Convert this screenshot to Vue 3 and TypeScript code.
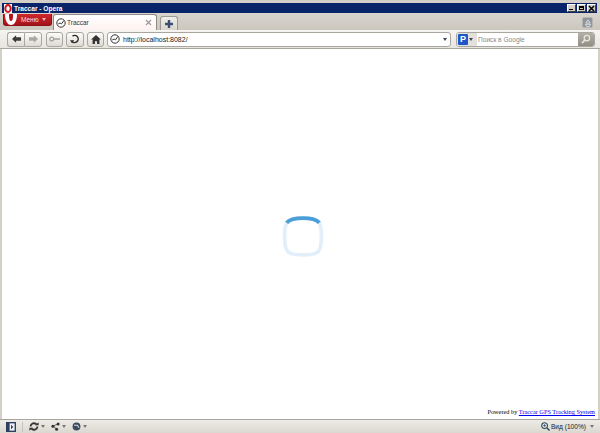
<template>
  <div class="window">
    <div class="titlebar">
      <svg class="title-logo" width="8" height="9" viewBox="0 0 8 9">
        <ellipse cx="4" cy="4.5" rx="2.7" ry="3.5" fill="none" stroke="#d3151c" stroke-width="2" />
      </svg>
      <span class="title-text">Traccar - Opera</span>
      <div class="win-buttons">
        <div class="win-btn"><span class="glyph-min"></span></div>
        <div class="win-btn"><span class="glyph-max"></span></div>
        <div class="win-btn">
          <svg width="7" height="7" viewBox="0 0 7 7">
            <path d="M1 1l5 5M6 1L1 6" stroke="#000" stroke-width="1.5" />
          </svg>
        </div>
      </div>
    </div>

    <div class="tabstrip">
      <div class="menu-btn">
        <svg class="menu-logo" width="12" height="11" viewBox="0 0 12 11">
          <path d="M0 0h12C12 6 10 11 6 11S0 6 0 0z" fill="#fff" />
          <ellipse cx="6" cy="2" rx="2" ry="5" fill="#b5121b" />
        </svg>
        <span class="menu-label">Меню</span>
        <span class="caret caret-light"></span>
      </div>
      <div class="tab">
        <svg class="globe" width="10" height="10" viewBox="0 0 11 11">
          <circle cx="5.5" cy="5.5" r="4.6" fill="#fff" stroke="#333" stroke-width="1.1" />
          <path d="M2.5 6.500l2-1 1.500 1L8.500 3" fill="none" stroke="#333" stroke-width="1.1" />
        </svg>
        <span class="tab-title">Traccar</span>
        <svg class="tab-close" width="7" height="7" viewBox="0 0 7 7">
          <path d="M1 1l5 5M6 1L1 6" stroke="#9a9a9a" stroke-width="1.2" />
        </svg>
      </div>
      <div class="new-tab">
        <svg width="8" height="8" viewBox="0 0 8 8">
          <path d="M4 0v8M0 4h8" stroke="#3b4f72" stroke-width="2.4" />
        </svg>
      </div>
      <div class="trash">
        <svg width="8" height="8" viewBox="0 0 9 9">
          <path d="M4.500 1l2.500 3.500H2zM1.500 6h6L6 8.500H3z" fill="none" stroke="#e2e4e6" stroke-width="1" />
        </svg>
      </div>
    </div>

    <div class="toolbar">
      <div class="btn-group">
        <div class="tool-btn">
          <svg width="9" height="8" viewBox="0 0 11 9"><path d="M0 4.500L5 0v2.500h6v4H5V9z" fill="#3c3c3c" /></svg>
        </div>
        <div class="tool-btn">
          <svg width="9" height="8" viewBox="0 0 11 9"><path d="M11 4.500L6 0v2.500H0v4h6V9z" fill="#a9a9a3" /></svg>
        </div>
      </div>
      <div class="tool-btn wand">
        <svg width="11" height="6" viewBox="0 0 14 7">
          <circle cx="3.5" cy="3.5" r="2.5" fill="none" stroke="#a5a5a0" stroke-width="1.6" />
          <path d="M6 3.500h8" stroke="#a5a5a0" stroke-width="2" />
        </svg>
      </div>
      <div class="tool-btn reload">
        <svg width="10" height="10" viewBox="0 0 12 12">
          <path d="M2 8.500A4.300 4.300 0 1 0 3 2.500" fill="none" stroke="#2d2d2d" stroke-width="1.8" />
          <path d="M0 7.500h5l-2.500 3.500z" fill="#2d2d2d" />
        </svg>
      </div>
      <div class="tool-btn home">
        <svg width="10" height="9" viewBox="0 0 12 11">
          <path d="M6 0l6 5.500h-1.800V11H7.300V7.500H4.700V11H1.800V5.500H0z" fill="#333" />
        </svg>
      </div>
      <div class="address">
        <svg class="globe" width="10" height="10" viewBox="0 0 11 11">
          <circle cx="5.5" cy="5.5" r="4.6" fill="#fff" stroke="#333" stroke-width="1.1" />
          <path d="M2.500 6.500l2-1 1.500 1L8.500 3" fill="none" stroke="#333" stroke-width="1.1" />
        </svg>
        <span class="address-text">http://localhost:8082/</span>
        <span class="caret caret-dark address-caret"></span>
      </div>
      <div class="search">
        <div class="engine">
          <span class="engine-icon">P</span>
          <span class="caret caret-dark"></span>
        </div>
        <span class="search-text">Поиск в Google</span>
        <div class="search-go">
          <svg width="10" height="10" viewBox="0 0 11 11">
            <circle cx="6.5" cy="4.5" r="3" fill="none" stroke="#e8e6e0" stroke-width="1.4" />
            <path d="M4.500 6.500L1 10" stroke="#e8e6e0" stroke-width="1.8" />
          </svg>
        </div>
      </div>
    </div>

    <main class="page">
      <div class="loader">
        <svg width="46" height="45" viewBox="0 0 44 44">
          <path
            d="M22 4C30 4 35 5 37 7.500C39.500 10 40 15 40 22C40 29 39.500 34 37 36.500C35 39 30 40 22 40C14 40 9 39 7 36.500C4.500 34 4 29 4 22C4 15 4.500 10 7 7.500C9 5 14 4 22 4Z"
            fill="none"
            stroke="#e3eefb"
            stroke-width="3.6"
          />
          <path d="M6 8.500C9 5 14 4 22 4C30 4 35 5 38 8.500" fill="none" stroke="#4a9fd8" stroke-width="3.8" />
        </svg>
      </div>
      <div class="powered">
        Powered by <a href="#" class="powered-link">Traccar GPS Tracking System</a>
      </div>
    </main>

    <div class="statusbar">
      <div class="panel-toggle">
        <svg width="10" height="10" viewBox="0 0 11 11">
          <rect width="11" height="11" fill="#2f3f5f" />
          <rect x="4" y="1.5" width="5.5" height="8" fill="#eef0f4" />
          <path d="M5.500 3l2.500 2.500L5.500 8z" fill="#2f3f5f" />
        </svg>
      </div>
      <div class="status-icons">
        <div class="status-item">
          <svg width="10" height="9" viewBox="0 0 13 11">
            <path d="M2 5.500A4.500 4.500 0 0 1 10 3M11 5.500A4.500 4.500 0 0 1 3 8" fill="none" stroke="#333" stroke-width="2.4" />
            <path d="M8 4h4.500V0zM5 7H.5v4z" fill="#333" />
          </svg>
          <span class="caret caret-grey"></span>
        </div>
        <div class="status-item">
          <svg width="9" height="9" viewBox="0 0 12 11">
            <circle cx="2.5" cy="5" r="2" fill="#333" />
            <circle cx="9.5" cy="2" r="2" fill="#333" />
            <circle cx="7.5" cy="9" r="2" fill="#333" />
            <path d="M2.500 5l7-3M2.500 5l5 4" stroke="#333" stroke-width="1" />
          </svg>
          <span class="caret caret-grey"></span>
        </div>
        <div class="status-item">
          <svg width="9" height="9" viewBox="0 0 11 11">
            <circle cx="5.5" cy="5.5" r="4.8" fill="#3c4a5e" />
            <path d="M2.500 4h4l2 3" fill="none" stroke="#d5dae2" stroke-width="1.3" />
          </svg>
          <span class="caret caret-grey"></span>
        </div>
      </div>
      <div class="zoom">
        <svg width="9" height="9" viewBox="0 0 10 10">
          <circle cx="4" cy="4" r="3.2" fill="#e8eef3" stroke="#2f4a58" stroke-width="1.2" />
          <path d="M6.500 6.500L9.500 9.500" stroke="#2f4a58" stroke-width="1.6" />
          <path d="M2.300 4h3.400M4 2.300v3.400" stroke="#2f4a58" stroke-width=".8" />
        </svg>
        <span class="zoom-text">Вид (100%)</span>
        <span class="caret caret-grey zoom-caret"></span>
      </div>
    </div>
  </div>
</template>

<script setup lang="ts">
</script>

<style>
html,
body {
  margin: 0;
  background: #fff;
}
</style>

<style scoped>
.window {
  width: 600px;
  height: 433px;
  box-sizing: border-box;
  display: flex;
  flex-direction: column;
  padding-top: 3px;
  background: #d4d0c8;
  font-family: "Liberation Sans", Arial, sans-serif;
  overflow: hidden;
}

.titlebar {
  height: 10px;
  margin: 0 3px 0 2px;
  display: flex;
  align-items: center;
  background: #0a246a;
  color: #fff;
  flex: none;
}

.title-logo {
  margin-left: 2px;
  background: #fff;
}

.title-text {
  margin-left: 2px;
  font-size: 6.6px;
  font-weight: bold;
}

.win-buttons {
  margin-left: auto;
  display: flex;
  gap: 1px;
  margin-right: 1px;
}

.win-btn {
  width: 9px;
  height: 8px;
  background: #d4d0c8;
  border: 1px solid;
  border-color: #fff #404040 #404040 #fff;
  box-sizing: border-box;
  position: relative;
  display: flex;
  align-items: center;
  justify-content: center;
}

.glyph-min {
  position: absolute;
  left: 1px;
  bottom: 1px;
  width: 4px;
  height: 1px;
  background: #000;
}

.glyph-max {
  width: 5px;
  height: 4px;
  box-sizing: border-box;
  border: 1px solid #000;
  border-top-width: 2px;
}

.tabstrip {
  height: 17px;
  flex: none;
  display: flex;
  align-items: flex-end;
  padding: 0 7px 0 3px;
  background: linear-gradient(#d8d5ce, #cbc7bf);
}

.menu-btn {
  align-self: flex-start;
  margin-top: 1px;
  width: 49px;
  height: 12px;
  box-sizing: border-box;
  display: flex;
  align-items: center;
  background: linear-gradient(#d0282d, #a5121a);
  border-radius: 0 0 3px 3px;
  border: 1px solid #8c1218;
  border-top: 0;
  color: #fff;
  overflow: hidden;
}

.menu-logo {
  margin-left: 1px;
  flex: none;
}

.menu-label {
  margin-left: 4px;
  font-size: 6.5px;
  color: #f7dfdf;
}

.caret {
  width: 0;
  height: 0;
  border-left: 2.5px solid transparent;
  border-right: 2.5px solid transparent;
  border-top: 3px solid #444;
}

.caret-light {
  margin-left: 3px;
  border-top-color: #eeb7b7;
}

.caret-dark {
  border-top-color: #3c4658;
}

.caret-grey {
  border-top-color: #777;
  margin-left: 2px;
}

.tab {
  width: 104px;
  height: 16px;
  margin-left: 1px;
  box-sizing: border-box;
  display: flex;
  align-items: center;
  padding: 0 4px 0 2px;
  background: linear-gradient(#fff, #fff2f0);
  border: 1px solid #8f8c85;
  border-bottom: 0;
  border-radius: 3px 3px 0 0;
}

.globe {
  flex: none;
}

.tab-title {
  margin-left: 1px;
  font-size: 6.5px;
  color: #333;
}

.tab-close {
  margin-left: auto;
}

.new-tab {
  width: 18px;
  height: 14px;
  margin-left: 3px;
  box-sizing: border-box;
  display: flex;
  align-items: center;
  justify-content: center;
  background: linear-gradient(#f1efeb, #d8d5ce);
  border: 1px solid #9c9992;
  border-bottom: 0;
  border-radius: 3px 3px 0 0;
}

.trash {
  margin-left: auto;
  margin-bottom: 2px;
  width: 11px;
  height: 11px;
  display: flex;
  align-items: center;
  justify-content: center;
  background: #8e949c;
  border: 1px solid #b5b5b5;
  border-radius: 2px;
  box-sizing: border-box;
}

.toolbar {
  height: 19px;
  flex: none;
  box-sizing: border-box;
  display: flex;
  align-items: center;
  padding: 0 5px 0 7px;
  background: linear-gradient(#f6f4f1, #e8e5df);
  border-bottom: 1px solid #a8a69f;
}

.btn-group {
  display: flex;
  margin-right: 4px;
}

.btn-group .tool-btn {
  width: 17px;
  border-radius: 0;
}

.btn-group .tool-btn:first-child {
  border-radius: 3px 0 0 3px;
  border-right: 0;
}

.btn-group .tool-btn:last-child {
  border-radius: 0 3px 3px 0;
  width: 18px;
}

.tool-btn {
  height: 15px;
  box-sizing: border-box;
  display: flex;
  align-items: center;
  justify-content: center;
  background: linear-gradient(#fdfcfb, #dedbd4);
  border: 1px solid #a9a6a0;
  border-radius: 3px;
}

.wand {
  width: 17px;
  margin-right: 3px;
}

.reload {
  width: 18px;
  margin-right: 3px;
}

.home {
  width: 17px;
  margin-right: 3px;
}

.address {
  width: 344px;
  height: 15px;
  box-sizing: border-box;
  display: flex;
  align-items: center;
  padding: 0 3px 0 2px;
  background: #fff;
  border: 1px solid #a9a6a0;
  border-radius: 3px;
}

.address-text {
  margin-left: 3px;
  font-size: 7px;
  color: #222;
}

.address-caret {
  margin-left: auto;
}

.search {
  width: 139px;
  height: 15px;
  margin-left: 5px;
  box-sizing: border-box;
  display: flex;
  align-items: center;
  background: #fff;
  border: 1px solid #a9a6a0;
  border-radius: 3px;
  overflow: hidden;
}

.engine {
  height: 100%;
  width: 20px;
  flex: none;
  display: flex;
  align-items: center;
  gap: 1px;
  background: #e3e1dc;
  padding-left: 1px;
  box-sizing: border-box;
}

.engine-icon {
  width: 10px;
  height: 11px;
  flex: none;
  background: #1f57c9;
  color: #fff;
  font-size: 9px;
  line-height: 11px;
  font-weight: bold;
  text-align: center;
  border-radius: 1px;
}

.search-text {
  margin-left: 1px;
  font-size: 6.6px;
  color: #8a8a8a;
}

.search-go {
  margin-left: auto;
  width: 16px;
  height: 100%;
  flex: none;
  display: flex;
  align-items: center;
  justify-content: center;
  background: linear-gradient(#b3b0a8, #918e86);
}

.page {
  flex: 1;
  margin: 0 2px;
  min-height: 0;
  display: flex;
  flex-direction: column;
  background: #fff;
}

.loader {
  flex: 1;
  display: flex;
  align-items: center;
  justify-content: center;
  padding: 16px 0 0 6px;
}

.loader svg {
  display: block;
}

.powered {
  padding: 0 3px 3px 0;
  text-align: right;
  font-family: "Liberation Serif", "Times New Roman", serif;
  font-size: 6.3px;
  line-height: 9px;
  color: #000;
}

.powered-link {
  color: #0000ee;
}

.statusbar {
  height: 14px;
  flex: none;
  box-sizing: border-box;
  display: flex;
  align-items: center;
  padding: 0 6px;
  background: linear-gradient(#eeebe6, #dbd8d1);
  border-top: 1px solid #a8a69f;
}

.panel-toggle {
  display: flex;
  padding-right: 6px;
  border-right: 1px solid #c4c1ba;
}

.status-icons {
  display: flex;
  align-items: center;
  gap: 6px;
  margin-left: 6px;
}

.status-item {
  display: flex;
  align-items: center;
}

.zoom {
  margin-left: auto;
  display: flex;
  align-items: center;
}

.zoom-text {
  margin-left: 1px;
  font-size: 6.6px;
  color: #222;
}

.zoom-caret {
  margin-left: 4px;
}
</style>
